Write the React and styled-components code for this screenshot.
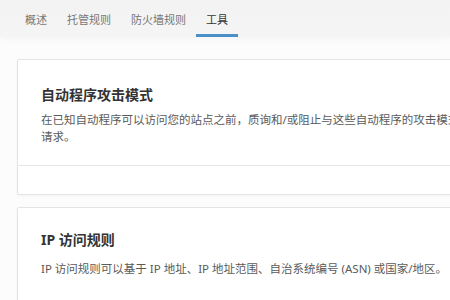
import React from 'react';
import styled, { createGlobalStyle } from 'styled-components';

const GlobalStyle = createGlobalStyle`
  html, body {
    margin: 0;
    padding: 0;
    background: #fcfcfc;
    overflow: hidden;
  }
  body {
    font-family: "Noto Sans", "Noto Sans CJK SC", sans-serif;
    color: #333;
  }
`;

const Page = styled.div`
  width: 450px;
  height: 300px;
  overflow: hidden;
`;

const TabBar = styled.nav`
  display: flex;
  height: 37px;
  padding-left: 15px;
  background: linear-gradient(#f2f2f2, #f5f5f5);
  box-shadow: 0 2px 8px rgba(0, 0, 0, 0.04);
`;

const Tab = styled.div`
  display: flex;
  align-items: center;
  padding: 3px 10px 0;
  font-size: 11px;
  color: ${p => (p.$active ? '#333' : '#777')};
  border-bottom: 3px solid ${p => (p.$active ? '#4a8fc6' : 'transparent')};
  box-sizing: border-box;
`;

const Content = styled.main`
  display: flex;
  flex-direction: column;
  gap: 12px;
  padding: 22px 0 0 17px;
`;

const Card = styled.section`
  width: 520px;
  flex-shrink: 0;
  background: #fff;
  border: 1px solid #e4e4e4;
  border-radius: 2px;
  box-shadow: 0 1px 3px rgba(0, 0, 0, 0.04);
`;

const CardBody = styled.div`
  padding: ${p => p.$top}px 0 ${p => p.$bottom}px 23px;
`;

const Title = styled.h3`
  margin: 0;
  font-size: 14px;
  line-height: 20px;
  font-weight: 700;
  color: #333;
`;

const Desc = styled.p`
  margin: ${p => p.$gap}px 0 0;
  width: 464px;
  font-size: 11.5px;
  line-height: 17px;
  color: #5a5a5a;
`;

const CardFooter = styled.div`
  height: 28px;
  border-top: 1px solid #e6e6e6;
`;

const tabs = ['概述', '托管规则', '防火墙规则', '工具'];

export default function App() {
  return (
    <Page>
      <GlobalStyle />
      <TabBar>
        {tabs.map(t => (
          <Tab key={t} $active={t === '工具'}>{t}</Tab>
        ))}
      </TabBar>
      <Content>
        <Card>
          <CardBody $top={25} $bottom={20}>
            <Title>自动程序攻击模式</Title>
            <Desc $gap={6}>
              在已知自动程序可以访问您的站点之前，质询和/或阻止与这些自动程序的攻击模式匹配的请求。
            </Desc>
          </CardBody>
          <CardFooter />
        </Card>
        <Card>
          <CardBody $top={22} $bottom={24}>
            <Title>IP 访问规则</Title>
            <Desc $gap={10}>
              IP 访问规则可以基于 IP 地址、IP 地址范围、自治系统编号 (ASN) 或国家/地区。
            </Desc>
          </CardBody>
        </Card>
      </Content>
    </Page>
  );
}
